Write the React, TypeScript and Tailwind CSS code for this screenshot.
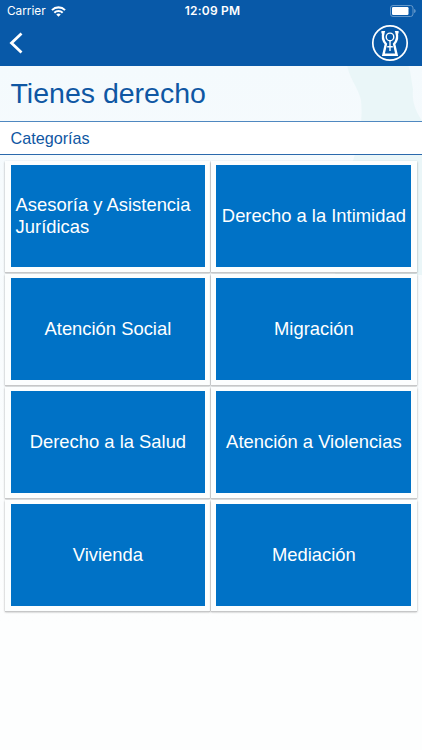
import React from 'react';

const categories = [
  'Asesoría y Asistencia Jurídicas',
  'Derecho a la Intimidad',
  'Atención Social',
  'Migración',
  'Derecho a la Salud',
  'Atención a Violencias',
  'Vivienda',
  'Mediación',
];

const WifiIcon = () => (
  <svg width="15" height="11" viewBox="0 0 14 10" fill="none" stroke="white" strokeWidth="1.9">
    <path d="M0.9 3.7a8.6 8.6 0 0 1 12.2 0" />
    <path d="M3.1 6.1a5.5 5.5 0 0 1 7.8 0" />
    <path d="M7 10 4.9 7.9a3 3 0 0 1 4.2 0Z" fill="white" stroke="none" />
  </svg>
);

const BatteryIcon = () => (
  <svg width="26" height="12" viewBox="0 0 26 12" fill="none">
    <rect x="0.5" y="0.5" width="22.5" height="11" rx="2.5" stroke="#6f9fce" strokeWidth="0.9" />
    <rect x="2" y="2" width="16.5" height="8" rx="1.2" fill="white" />
    <path d="M24.2 4v4c1-.4 1.4-1.1 1.4-2s-.4-1.6-1.4-2Z" fill="#6f9fce" />
  </svg>
);

const Logo = () => (
  <svg width="38" height="38" viewBox="0 0 38 38" fill="none" stroke="white">
    <circle cx="19" cy="19" r="17.2" strokeWidth="1.7" />
    <path d="M10.4 8.2H12.6C11.4 12 11.6 16.5 14.9 20L12.4 30.8H25.6L23.1 20C26.4 16.5 26.6 12 25.4 8.2H27.6" strokeWidth="2.4" />
    <circle cx="19" cy="12.9" r="3.8" strokeWidth="1.4" />
    <path d="M19 16.7V27M16.2 22.8H21.8" strokeWidth="1.4" />
  </svg>
);

const CategoryCard = ({ name }: { name: string; key?: React.Key }) => (
  <button className="h-[111px] bg-[#fcfefe] px-[5.2px] pb-[5px] pt-[4px] text-left shadow-[0_1px_0_#c6c7c8,0_1px_2px_rgba(0,0,0,0.35)]">
    <span className="flex h-full w-full items-center justify-center bg-[#0072c6] px-[5px] text-[18.4px] leading-[22.5px] text-white">
      {name}
    </span>
  </button>
);

export default function App() {
  return (
    <div className="relative isolate h-[750px] w-full overflow-hidden bg-[#fdfefe] font-['Liberation_Sans',Arial,sans-serif] text-[#0f57a3]">
      <svg className="absolute inset-x-0 top-[65px] -z-10" width="422" height="560" viewBox="0 0 422 560">
        <defs>
          <linearGradient id="fade" x1="0" y1="0" x2="0" y2="1">
            <stop offset="0" stopColor="#f4fafd" />
            <stop offset="1" stopColor="#fdfefe" />
          </linearGradient>
        </defs>
        <rect width="422" height="560" fill="url(#fade)" />
        <path d="M347 0C350 15 358 22 361 35C364 65 355 90 344 125L335 210H422V56C414 43 412 35 413 24C411 14 411 7 408 0Z" fill="#eaf6f8" />
      </svg>

      <header className="h-[65.5px] bg-[#0859a8] text-white">
        <div className="grid h-[22px] grid-cols-3 items-center px-[7px]">
          <div className="flex items-center gap-[5px] pt-px font-[Inter,sans-serif] text-[11.8px]">
            <span>Carrier</span>
            <WifiIcon />
          </div>
          <span className="pl-[3px] text-center font-[Inter,sans-serif] text-[12px] font-semibold tracking-[0.2px]">
            12:09 PM
          </span>
          <div className="-mr-[1px] flex justify-end pb-px">
            <BatteryIcon />
          </div>
        </div>
        <div className="flex h-[42px] items-center justify-between pl-[9px] pr-[13.5px]">
          <svg width="15" height="22" viewBox="0 0 15 22" fill="none" stroke="white" strokeWidth="2.8">
            <path d="M12.5 1.5 2.5 11l10 9.5" />
          </svg>
          <Logo />
        </div>
      </header>

      <h1 className="flex h-[55px] items-center pl-[10.5px] text-[28.5px]">Tienes derecho</h1>
      <h2 className="flex h-[34.5px] items-center border-y border-b-[#2a69ac] border-t-[#4f88c0] bg-white pl-[10.5px] text-[16.2px]">
        Categorías
      </h2>

      <main className="grid grid-cols-[205px_205.6px] gap-x-[0.7px] gap-y-[2px] pl-[5.4px] pt-[6px]">
        {categories.map(name => (
          <CategoryCard key={name} name={name} />
        ))}
      </main>
    </div>
  );
}
